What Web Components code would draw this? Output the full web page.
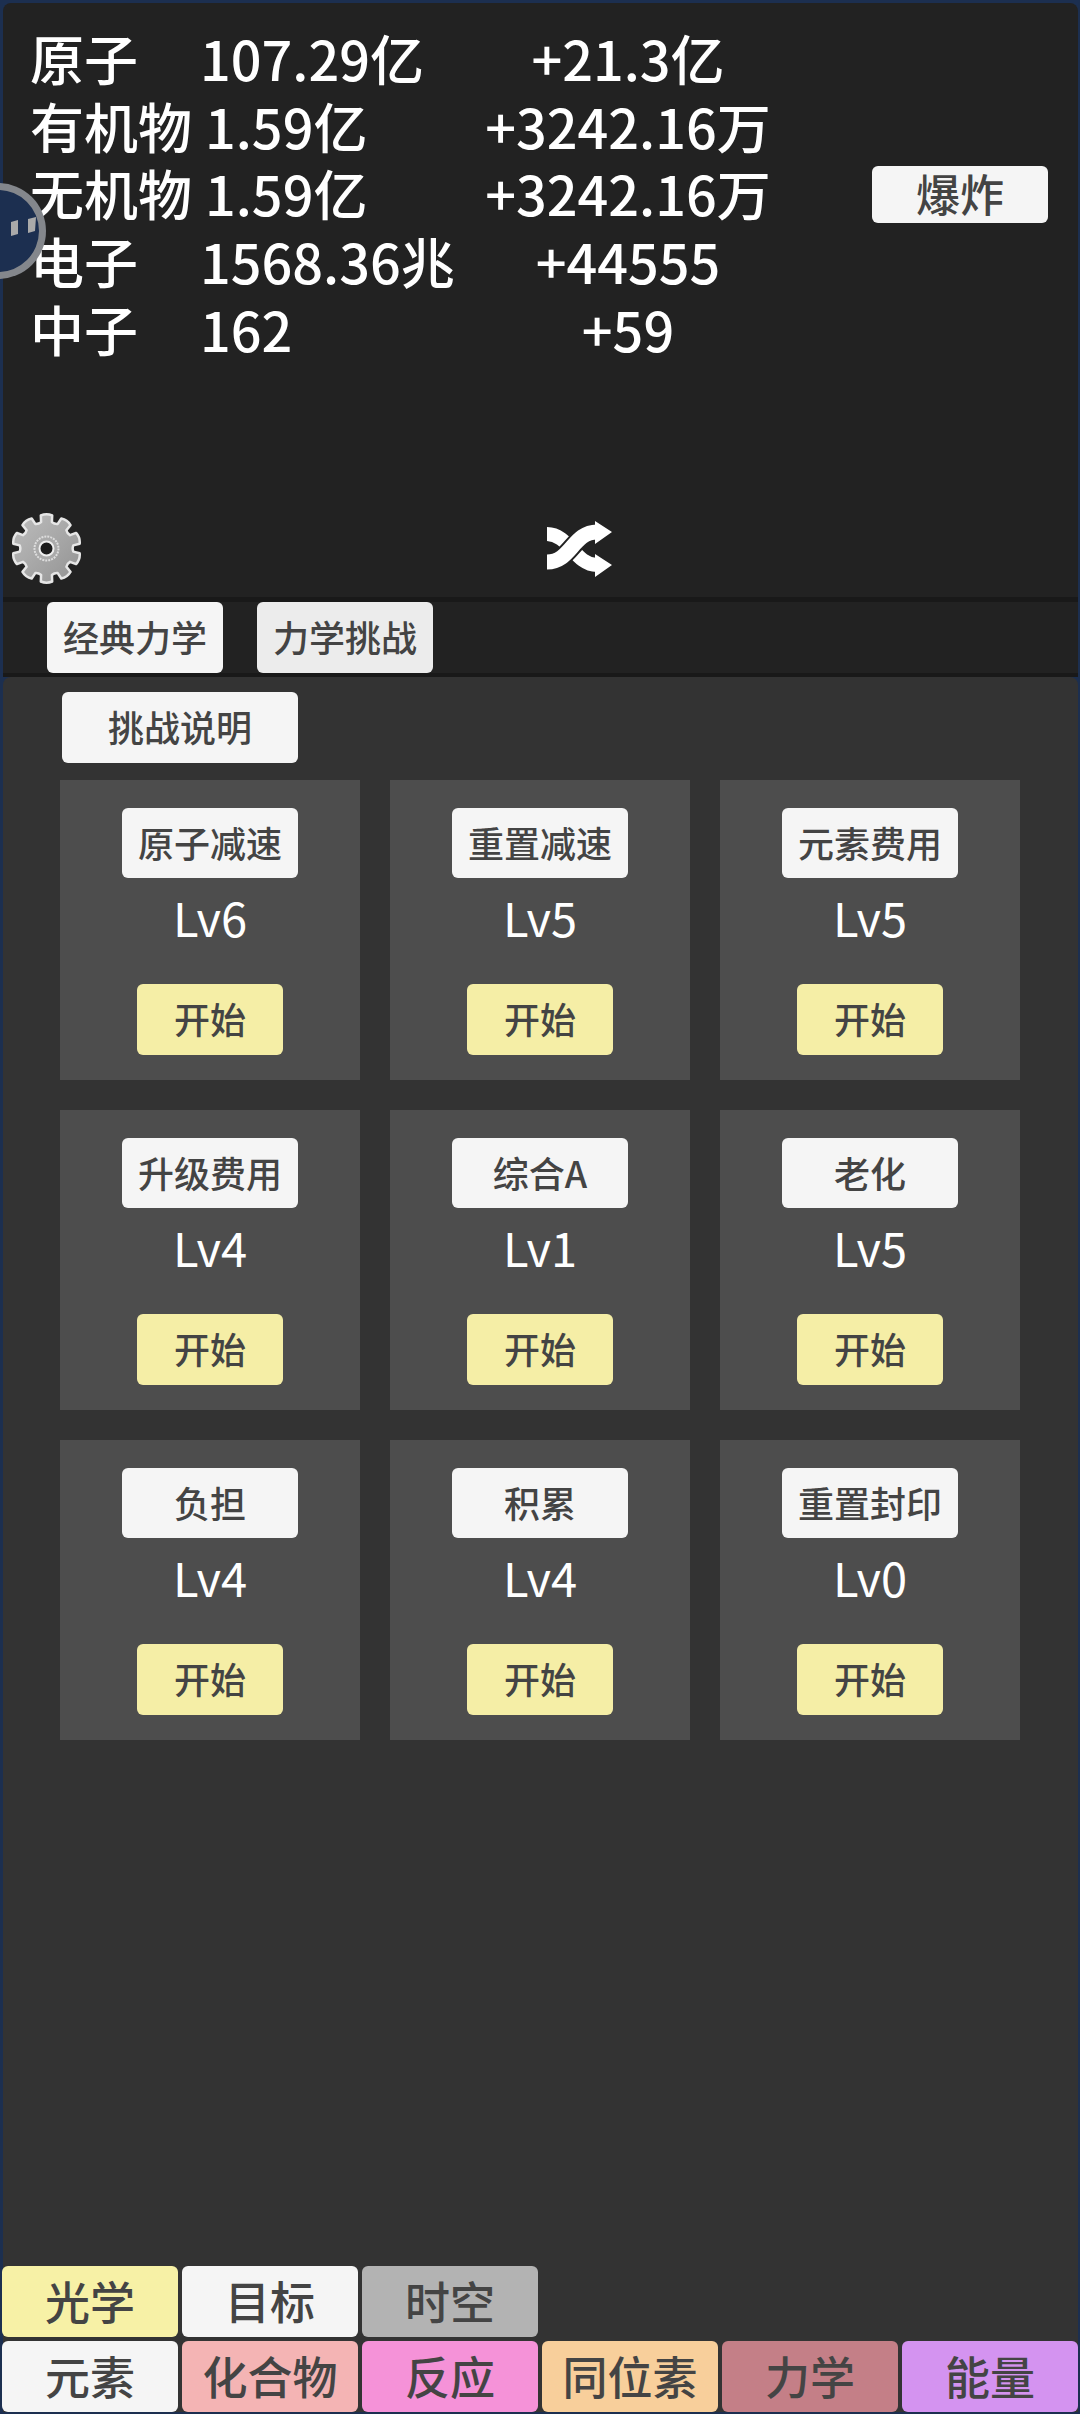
<!DOCTYPE html>
<html lang="zh">
<head>
<meta charset="utf-8">
<title>原子</title>
<style>
  html, body { margin: 0; padding: 0; background: #1c2f50; }
  body { width: 1080px; height: 2414px; overflow: hidden; font-family: "Noto Sans CJK SC", "Noto Sans", sans-serif; font-weight: 500; }
</style>
</head>
<body>
<game-page>
  <float-ball slot="float"></float-ball>

  <top-panel slot="top">
    <stat-row label="原子" value="107.29亿" rate="+21.3亿"></stat-row>
    <stat-row label="有机物" value="1.59亿" rate="+3242.16万" shift="5"></stat-row>
    <stat-row label="无机物" value="1.59亿" rate="+3242.16万" shift="5"></stat-row>
    <stat-row label="电子" value="1568.36兆" rate="+44555"></stat-row>
    <stat-row label="中子" value="162" rate="+59"></stat-row>
    <game-btn slot="action" style="--w:176px;--h:57px;--fs:44px;margin-top:2px">爆炸</game-btn>
    <gear-icon slot="gear"></gear-icon>
    <shuffle-icon slot="shuffle"></shuffle-icon>
  </top-panel>

  <tab-bar slot="tabs">
    <game-btn style="--w:176px;--h:71px;--fs:36px">经典力学</game-btn>
    <game-btn style="--w:176px;--h:71px;--fs:36px;--bg:#ececec">力学挑战</game-btn>
  </tab-bar>

  <challenge-panel slot="main">
    <game-btn slot="intro" style="--w:236px;--h:71px;--fs:36px">挑战说明</game-btn>
    <challenge-card name="原子减速" level="Lv6"></challenge-card>
    <challenge-card name="重置减速" level="Lv5"></challenge-card>
    <challenge-card name="元素费用" level="Lv5"></challenge-card>
    <challenge-card name="升级费用" level="Lv4"></challenge-card>
    <challenge-card name="综合A" level="Lv1"></challenge-card>
    <challenge-card name="老化" level="Lv5"></challenge-card>
    <challenge-card name="负担" level="Lv4"></challenge-card>
    <challenge-card name="积累" level="Lv4"></challenge-card>
    <challenge-card name="重置封印" level="Lv0"></challenge-card>
    <bottom-nav slot="nav">
      <game-btn style="--bg:#f7f1a6">光学</game-btn>
      <game-btn>目标</game-btn>
      <game-btn style="--bg:#b3b3b3">时空</game-btn>
      <span></span><span></span><span></span>
      <game-btn>元素</game-btn>
      <game-btn style="--bg:#f4b4b4">化合物</game-btn>
      <game-btn style="--bg:#f592d8">反应</game-btn>
      <game-btn style="--bg:#f8cf9b">同位素</game-btn>
      <game-btn style="--bg:#c47f87">力学</game-btn>
      <game-btn style="--bg:#d493f0">能量</game-btn>
    </bottom-nav>
  </challenge-panel>
</game-page>

<script>
// small helper: every element below is just a template in an open shadow root
function define(tag, html, setup) {
  customElements.define(tag, class extends HTMLElement {
    connectedCallback() {
      if (this.shadowRoot) return;
      const shadow = this.attachShadow({ mode: 'open' });
      shadow.innerHTML = html;
      if (setup) setup(this, shadow);
    }
  });
}

define('game-page', `
  <style>
    :host { display: flex; flex-direction: column; position: relative; width: 1080px; height: 2414px;
            box-sizing: border-box; padding: 3px 2px 2px 3px; overflow: hidden; }
  </style>
  <slot name="top"></slot>
  <slot name="tabs"></slot>
  <slot name="main"></slot>
  <slot name="float"></slot>
`);

define('game-btn', `
  <style>
    :host { display: flex; align-items: center; justify-content: center; flex: none;
            width: var(--w, 176px); height: var(--h, 71px); box-sizing: border-box; padding-bottom: 3px;
            background: var(--bg, #f5f5f5); color: #444; border-radius: 6px;
            font-size: var(--fs, 45px); line-height: 1; white-space: nowrap; }
  </style>
  <slot></slot>
`);

define('top-panel', `
  <style>
    :host { display: flex; flex-direction: column; flex: none; height: 594px; box-sizing: border-box;
            background: #222; border-radius: 8px 8px 0 0; padding: 21px 0 12px; }
    .head { display: flex; align-items: center; justify-content: space-between; padding: 0 30px 0 27px; }
    .stats { display: flex; flex-direction: column; }
    .foot { display: flex; align-items: center; gap: 464px; margin-top: auto; padding-left: 7px; }
  </style>
  <div class="head">
    <div class="stats"><slot></slot></div>
    <slot name="action"></slot>
  </div>
  <div class="foot"><slot name="gear"></slot><slot name="shuffle"></slot></div>
`);

define('stat-row', `
  <style>
    :host { display: grid; grid-template-columns: 170px 280px 296px; height: 67.7px; align-items: center;
            color: #fff; font-size: 54px; line-height: 1; white-space: nowrap; }
    .r { text-align: center; }
  </style>
  <span class="l"></span><span class="v"></span><span class="r"></span>
`, (el, s) => {
  s.querySelector('.l').textContent = el.getAttribute('label');
  s.querySelector('.v').textContent = el.getAttribute('value');
  s.querySelector('.r').textContent = el.getAttribute('rate');
  s.querySelector('.v').style.marginLeft = (el.getAttribute('shift') || 0) + 'px';
});

define('gear-icon', `
  <style>:host { display: block; width: 73px; height: 73px; } svg { display: block; }</style>
  <svg width="73" height="73" viewBox="0 0 73 73">
    <defs>
      <linearGradient id="g" x1="0" y1="0" x2="1" y2="1">
        <stop offset="0" stop-color="#bdbdbd"/><stop offset=".5" stop-color="#a8a8a8"/><stop offset="1" stop-color="#929292"/>
      </linearGradient>
    </defs>
    <path class="gear" fill="url(#g)" stroke="#e6e6e6" stroke-width="2.5" stroke-linejoin="round"/>
    <circle cx="36.5" cy="36.5" r="12" fill="#aaa" stroke="#ddd" stroke-width="2" stroke-dasharray="2 1"/>
    <circle cx="36.5" cy="36.5" r="7" fill="#1c1c1c" stroke="#eee" stroke-width="2"/>
  </svg>
`, (el, s) => {
  // ten teeth round the wheel, wide and rounded at the tip
  let d = '';
  for (let i = 0; i < 10; i++) {
    const a = (i * 36 - 90) * Math.PI / 180;
    const p = (r, o) => (36.5 + r * Math.cos(a + o)).toFixed(1) + ' ' + (36.5 + r * Math.sin(a + o)).toFixed(1);
    d += (i ? 'L' : 'M') + p(27, -0.2) + 'L' + p(33.5, -0.17) + 'Q' + p(35.5, 0) + ' ' + p(33.5, 0.17) + 'L' + p(27, 0.2)
      + 'Q' + p(25.5, 0.314) + ' ' + p(27, 0.428);
  }
  s.querySelector('.gear').setAttribute('d', d + 'Z');
});

define('shuffle-icon', `
  <style>:host { display: block; width: 65px; height: 56px; } svg { display: block; }</style>
  <svg width="65" height="56" viewBox="0 0 65 56">
    <path d="M0 13C22 13 28 44 50 44" fill="none" stroke="#fff" stroke-width="14"/>
    <path d="M0 41C24 41 26 11 50 11" fill="none" stroke="#222" stroke-width="19"/>
    <path d="M0 41C24 41 26 11 50 11" fill="none" stroke="#fff" stroke-width="15"/>
    <path d="M48 0L65 11L48 23ZM48 33L65 44L48 56Z" fill="#fff"/>
  </svg>
`);

define('tab-bar', `
  <style>
    :host { display: flex; flex: none; gap: 34px; height: 71px; padding-left: 44px; background: #222;
            border-top: 5px solid #191919; border-bottom: 4px solid #191919; }
  </style>
  <slot></slot>
`);

define('challenge-panel', `
  <style>
    :host { display: flex; flex-direction: column; flex: 1; min-height: 0; background: #333;
            border-radius: 8px 8px 0 0; padding: 15px 0 0; }
    .intro { display: flex; padding-left: 59px; }
    .grid { display: grid; grid-template-columns: repeat(3, 300px); gap: 30px; padding: 17px 0 0 57px; }
    .nav { margin-top: auto; }
  </style>
  <div class="intro"><slot name="intro"></slot></div>
  <div class="grid"><slot></slot></div>
  <div class="nav"><slot name="nav"></slot></div>
`);

define('challenge-card', `
  <style>
    :host { display: flex; flex-direction: column; align-items: center; width: 300px; height: 300px;
            box-sizing: border-box; padding-top: 28px; background: #4d4d4d; color: #fff; }
    .lv { height: 80px; padding-bottom: 3px; box-sizing: border-box; display: flex; align-items: center;
          font-size: 47px; font-weight: 400; line-height: 1; }
    .start { margin-top: 26px; }
  </style>
  <game-btn style="--w:176px;--h:70px;--fs:36px"><span class="n"></span></game-btn>
  <div class="lv"></div>
  <game-btn class="start" style="--w:146px;--h:71px;--fs:36px;--bg:#f5eea6">开始</game-btn>
`, (el, s) => {
  s.querySelector('.n').textContent = el.getAttribute('name');
  s.querySelector('.lv').textContent = el.getAttribute('level');
});

define('bottom-nav', `
  <style>
    :host { display: grid; grid-template-columns: repeat(6, 176px); grid-auto-rows: 71px; gap: 4px; margin-left: -1px; }
  </style>
  <slot></slot>
`);

// overlay ball sitting half off the left edge
define('float-ball', `
  <style>
    :host { position: absolute; left: -50px; top: 183px; width: 96px; height: 96px; border-radius: 50%;
            box-sizing: border-box; border: 7px solid rgba(150,150,150,.85); background: #1c2f50; }
    svg { position: absolute; left: 43px; top: 23px; }
  </style>
  <svg width="40" height="28" viewBox="0 0 40 28">
    <path d="M11 9L18 7L18 21L11 23ZM28 6L36 4L35 18L28 20Z" fill="#aaa"/>
  </svg>
`);
</script>
</body>
</html>
